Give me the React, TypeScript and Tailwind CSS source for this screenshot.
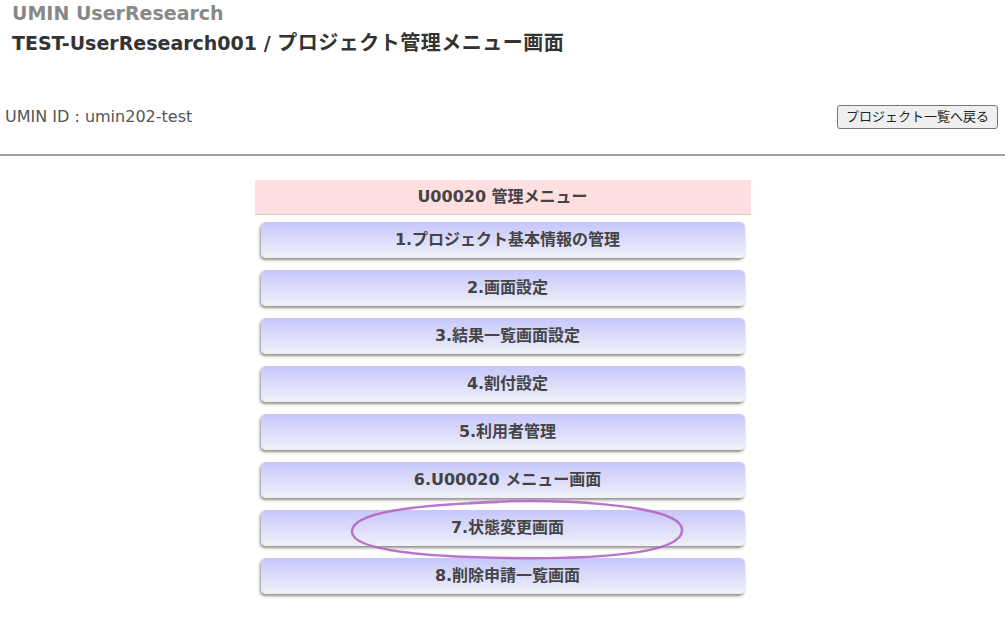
const menus = [
  "1.プロジェクト基本情報の管理",
  "2.画面設定",
  "3.結果一覧画面設定",
  "4.割付設定",
  "5.利用者管理",
  "6.U00020 メニュー画面",
  "7.状態変更画面",
  "8.削除申請一覧画面",
];

export default function App() {
  return (
    <div
      className="w-[1005px] h-[622px] bg-white text-[#333] overflow-hidden"
      style={{ fontFamily: '"DejaVu Sans", "Noto Sans CJK JP", sans-serif' }}
    >
      <div className="pl-[12px] pt-[1px]">
        <div className="text-[19px] font-bold text-[#888] leading-[24px]">UMIN UserResearch</div>
        <div className="text-[19px] font-bold text-[#333] leading-[24px] mt-[6px]">
          TEST-UserResearch001 / <span className="text-[20px] tracking-[0.5px]">プロジェクト管理メニュー画面</span>
        </div>
      </div>

      <div className="flex items-center justify-between pl-[5px] pr-[7px] mt-[50px]">
        <span className="text-[16px] text-[#555]">UMIN ID : umin202-test</span>
        <button className="text-[13px] text-[#222] bg-[#efefef] border border-[#767676] rounded-[3px] px-[8px] h-[24px] leading-[20px]">
          プロジェクト一覧へ戻る
        </button>
      </div>

      <div className="mt-[25px] border-t-2 border-[#a0a0a0]" />

      <div className="relative w-[496px] mx-auto mt-[24px]">
        <div className="h-[35px] bg-[#ffdfe0] border-b border-[#d8c8c8] flex items-center justify-center text-[16px] font-bold text-[#444]">
          U00020 管理メニュー
        </div>
        <div className="flex flex-col gap-[12px] px-[6px] pt-[7px]">
          {menus.map((m) => (
            <div
              key={m}
              className="h-[36px] pl-[10px] rounded-[5px] bg-gradient-to-b from-[#c6c6fb] to-[#f1f1f8] shadow-[-1px_2px_3px_rgba(0,0,0,0.45)] flex items-center justify-center text-[16px] font-bold text-[#444]"
            >
              {m}
            </div>
          ))}
        </div>
        <svg
          className="absolute left-[94px] top-[319px] pointer-events-none"
          width="338"
          height="62"
          viewBox="0 0 338 62"
        >
          <path
            d="M 120 4 C 200 -1 330 4 333 30 C 336 56 240 60 160 59 C 80 58 4 52 3 33 C 2 14 60 6 150 3"
            fill="none"
            stroke="#b466c2"
            strokeWidth="2.5"
            opacity="0.9"
          />
        </svg>
      </div>
    </div>
  );
}
